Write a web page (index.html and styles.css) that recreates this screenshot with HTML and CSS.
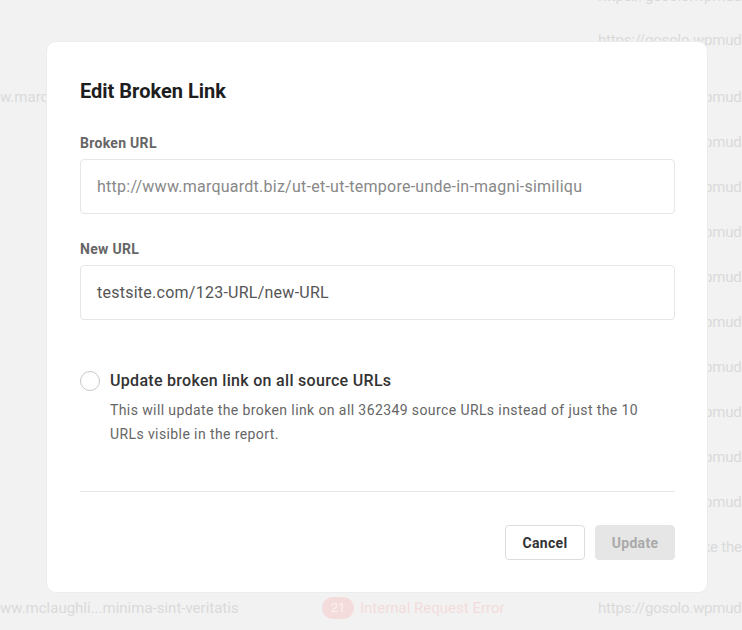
FILE: index.html
```html
<!DOCTYPE html>
<html lang="en">
<head>
<meta charset="utf-8">
<title>Edit Broken Link</title>
<link rel="stylesheet" href="styles.css">
</head>
<body>
<div class="page">
  <div class="table">
    <div class="row row-top"><span class="cell c1"></span><span class="cell c2"></span><span class="cell c3">https://gosolo.wpmudev.org/ping/page</span></div>
    <div class="row row-first"><span class="cell c1"></span><span class="cell c2"></span><span class="cell c3">https://gosolo.wpmudev.org/</span></div>
    <div class="row"><span class="cell c1">w.marquardt.biz/ut-et-ut</span><span class="cell c2"></span><span class="cell c3">https://gosolo.wpmudev.org/</span></div>
    <div class="row"><span class="cell c1"></span><span class="cell c2"></span><span class="cell c3">https://gosolo.wpmudev.org/</span></div>
    <div class="row"><span class="cell c1"></span><span class="cell c2"></span><span class="cell c3">https://gosolo.wpmudev.org/</span></div>
    <div class="row"><span class="cell c1"></span><span class="cell c2"></span><span class="cell c3">https://gosolo.wpmudev.org/</span></div>
    <div class="row"><span class="cell c1"></span><span class="cell c2"></span><span class="cell c3">https://gosolo.wpmudev.org/</span></div>
    <div class="row"><span class="cell c1"></span><span class="cell c2"></span><span class="cell c3">https://gosolo.wpmudev.org/</span></div>
    <div class="row"><span class="cell c1"></span><span class="cell c2"></span><span class="cell c3">https://gosolo.wpmudev.org/</span></div>
    <div class="row"><span class="cell c1"></span><span class="cell c2"></span><span class="cell c3">https://gosolo.wpmudev.org/</span></div>
    <div class="row"><span class="cell c1"></span><span class="cell c2"></span><span class="cell c3">https://gosolo.wpmudev.org/</span></div>
    <div class="row"><span class="cell c1"></span><span class="cell c2"></span><span class="cell c3">https://gosolo.wpmudev.org/</span></div>
    <div class="row"><span class="cell c1"></span><span class="cell c2"></span><span class="cell c3">Please try to make the request</span></div>
    <div class="row row-last"><span class="cell c1">ww.mclaughli...minima-sint-veritatis</span><span class="cell c2"><span class="badge">21</span>Internal Request Error</span><span class="cell c3">https://gosolo.wpmudev.org/</span></div>
  </div>

  <div class="modal">
    <h1 class="title">Edit Broken Link</h1>

    <div class="field field-first">
      <div class="label">Broken URL</div>
      <div class="input input-muted">http://www.marquardt.biz/ut-et-ut-tempore-unde-in-magni-similiqu</div>
    </div>

    <div class="field">
      <div class="label">New URL</div>
      <div class="input">testsite.com/123-URL/new-URL</div>
    </div>

    <div class="option">
      <span class="radio"></span>
      <div class="option-text">
        <div class="option-title">Update broken link on all source URLs</div>
        <p class="option-desc">This will update the broken link on all 362349 source URLs instead of just the 10 URLs visible in the report.</p>
      </div>
    </div>

    <hr class="divider">

    <div class="actions">
      <button class="btn btn-cancel">Cancel</button>
      <button class="btn btn-update">Update</button>
    </div>
  </div>
</div>
</body>
</html>
```

FILE: styles.css
```css
* { box-sizing: border-box; }

html, body {
  margin: 0;
  padding: 0;
  width: 742px;
  height: 630px;
  overflow: hidden;
  background: #f2f2f2;
  font-family: Roboto, "Liberation Sans", sans-serif;
}

.page {
  position: relative;
  width: 742px;
  height: 630px;
  overflow: hidden;
  background: #f2f2f2;
}

/* faded table behind the overlay */
.table {
  display: flex;
  flex-direction: column;
  margin-top: -24px;
}

.row {
  display: flex;
  align-items: center;
  flex: none;
  height: 45px;
  font-size: 15px;
  line-height: 20px;
  color: #dadada;
  white-space: nowrap;
}

.row-top { height: 40px; }
.row-first { height: 58px; align-items: flex-start; padding-top: 14px; }
.row-last { height: 78px; }

.cell { overflow: hidden; }
.c1 { width: 322px; padding-right: 20px; }
.c2 { width: 276px; display: flex; align-items: center; color: #f2dcdc; }
.c3 { flex: 1; letter-spacing: -0.2px; }

.badge {
  display: inline-flex;
  align-items: center;
  justify-content: center;
  width: 32px;
  height: 22px;
  margin-right: 6px;
  border-radius: 11px;
  background: #f4dcdc;
  color: #fbf0f0;
  font-size: 13px;
}

/* modal */
.modal {
  position: absolute;
  left: 46px;
  top: 41px;
  width: 662px;
  height: 552px;
  padding: 35px 32px 0 34px;
  background: #fff;
  border-radius: 10px;
  border: 1px solid #ececec;
}

.title {
  margin: 0;
  font-size: 20px;
  line-height: 28px;
  font-weight: 700;
  color: #1e1e1e;
  margin-left: -1px;
}

.field { margin-top: 25px; }
.field-first { margin-top: 28px; }

.label {
  font-size: 14px;
  line-height: 20px;
  font-weight: 700;
  letter-spacing: 0.3px;
  color: #666;
  margin-left: -1px;
}

.input {
  margin-top: 6px;
  height: 55px;
  display: flex;
  align-items: center;
  padding: 0 16px;
  border: 1px solid #e6e6e6;
  border-radius: 4px;
  font-size: 16px;
  letter-spacing: 0.25px;
  color: #555;
  white-space: nowrap;
  overflow: hidden;
  margin-left: -1px;
}

.input-muted { color: #888; }

.option {
  display: flex;
  margin-top: 49px;
  margin-left: -1px;
}

.radio {
  flex: none;
  width: 20px;
  height: 20px;
  margin-top: 2px;
  border: 1px solid #c8c8c8;
  border-radius: 50%;
  background: #fff;
}

.option-text { margin-left: 10px; }

.option-title {
  font-size: 16px;
  line-height: 24px;
  font-weight: 500;
  letter-spacing: 0.3px;
  color: #333;
}

.option-desc {
  margin: 5px 0 0;
  max-width: 545px;
  font-size: 14px;
  line-height: 24px;
  color: #666;
  letter-spacing: 0.4px;
}

.divider {
  margin: 45px 0 0;
  border: 0;
  border-top: 1px solid #e6e6e6;
  margin-left: -1px;
}

.actions {
  display: flex;
  justify-content: flex-end;
  gap: 10px;
  margin-top: 33px;
}

.btn {
  height: 35px;
  width: 80px;
  border-radius: 4px;
  font-family: Roboto, "Liberation Sans", sans-serif;
  font-size: 14px;
  font-weight: 700;
  letter-spacing: 0.3px;
  cursor: pointer;
}

.btn-cancel {
  background: #fff;
  border: 1px solid #dddddd;
  color: #333;
}

.btn-update {
  background: #e6e6e6;
  border: 1px solid #e6e6e6;
  color: #aaa;
}
```
